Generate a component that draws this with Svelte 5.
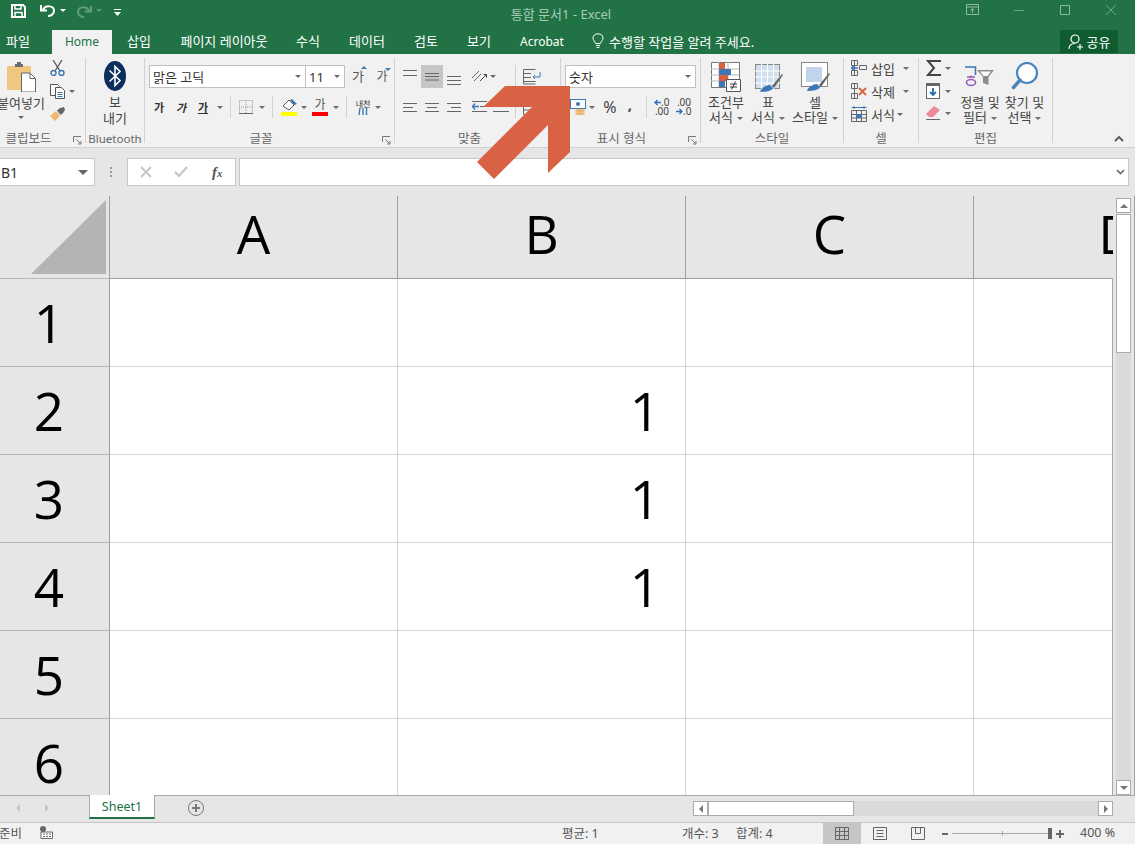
<script>
	const columns = ['A', 'B', 'C', 'D']
	const rows = [
		{ n: 1, b: '' },
		{ n: 2, b: '1' },
		{ n: 3, b: '1' },
		{ n: 4, b: '1' },
		{ n: 5, b: '' },
		{ n: 6, b: '' },
	]
	const mainTabs = [
		{ label: '파일', w: 36 },
		{ label: 'Home', w: 60, active: true, latin: true },
		{ label: '삽입', w: 54 },
		{ label: '페이지 레이아웃', w: 116 },
		{ label: '수식', w: 52 },
		{ label: '데이터', w: 66 },
		{ label: '검토', w: 52 },
		{ label: '보기', w: 54 },
		{ label: 'Acrobat', w: 72, latin: true },
	]
</script>

{#snippet caret(cls = '')}
	<span class="caret {cls}"></span>
{/snippet}

{#snippet launcher()}
	<svg class="launcher" width="9" height="9" viewBox="0 0 9 9" fill="none" stroke="#777">
		<path d="M0.5 6V0.5H8" />
		<path d="M3.5 3.5L7.5 7.5M5 8H8V5" />
	</svg>
{/snippet}

{#snippet lines(d)}
	<svg width="16" height="18" viewBox="0 0 16 18" stroke="#666" fill="none"><path {d} /></svg>
{/snippet}

<div class="app">
	<header class="titlebar">
		<div class="qat">
			<svg class="save" width="15" height="14" viewBox="0 0 15 14" fill="none" stroke="#fff" stroke-width="2">
				<path d="M1 1H12L14 3V13H1Z" />
				<path d="M4 1V5H10V1M4 13V8.5H11V13" stroke-width="1.5" />
			</svg>
			<svg class="undo" width="16" height="13" viewBox="0 0 16 13" fill="none" stroke="#fff" stroke-width="2">
				<path d="M3 6C5 1 14 1 14 7C14 10 11 12 8 12" />
				<path d="M1 1V6.5H7" />
			</svg>
			{@render caret('white')}
			<svg class="redo" width="16" height="13" viewBox="0 0 16 13" fill="none" stroke="#5f9d7e" stroke-width="2">
				<path d="M13 6C11 1 2 1 2 7C2 10 5 12 8 12" />
				<path d="M15 1V6.5H9" />
			</svg>
			{@render caret('dim')}
			<svg class="custom" width="7" height="7" viewBox="0 0 7 7">
				<path d="M0 0H7V1H0ZM0 3H7L3.5 7Z" fill="#fff" />
			</svg>
		</div>
		<div class="doc-title">통합 문서1 - Excel</div>
		<div class="winbtns">
			<svg class="ribbonopt" width="14" height="12" viewBox="0 0 14 12" fill="none" stroke="#8fb8a3">
				<path d="M0.5 0.5H12.5V10.5H0.5ZM0.5 3H12.5M6.5 9V5M4.5 6.5L6.5 4.5L8.5 6.5" />
			</svg>
			<svg width="12" height="12" viewBox="0 0 12 12" stroke="#6ea58a"><path d="M1 6.5H11" /></svg>
			<svg width="12" height="12" viewBox="0 0 12 12" fill="none" stroke="#8fb8a3"><path d="M1.5 1.5H10.5V10.5H1.5Z" /></svg>
			<svg width="12" height="12" viewBox="0 0 12 12" stroke="#6ea58a"><path d="M1 1L11 11M11 1L1 11" /></svg>
		</div>
	</header>

	<nav class="tabrow">
		{#each mainTabs as t}
			<div class="tab" class:active={t.active} class:latin={t.latin} style:width="{t.w}px">{t.label}</div>
		{/each}
		<div class="tellme">
			<svg width="12" height="16" viewBox="0 0 12 16" fill="none" stroke="#fff">
				<path d="M3.5 10.5C3 8 1 7.5 1 5C1 2.5 3.2 0.8 6 0.8S11 2.5 11 5C11 7.5 9 8 8.5 10.5ZM4 12.5H8M4.5 14.5H7.5" />
			</svg>
			<span>수행할 작업을 알려 주세요.</span>
		</div>
		<div class="share">
			<svg width="16" height="16" viewBox="0 0 16 16" fill="none" stroke="#fff" stroke-width="1.2">
				<circle cx="7" cy="5" r="4" />
				<path d="M1 15C1 11 4 9.5 7 9.5M9 13H15M12 10V16" />
			</svg>
			<span>공유</span>
		</div>
	</nav>

	<section class="ribbon">
		<div class="group clipboard">
			<div class="body clipbody">
				<div class="bigbtn paste">
					<svg width="29" height="30" viewBox="0 0 29 30">
						<rect x="0" y="4" width="24" height="24" rx="1" fill="#f0c77f" />
						<path d="M8 5V2H10V0H14V2H16V5Z" fill="#6e6e6e" />
						<path d="M14.5 11H23L28.5 16.5V30H14.5Z" fill="#fff" stroke="#666" />
						<path d="M23 11V16.5H28.5" fill="none" stroke="#666" />
					</svg>
					<span class="bigtext">붙여넣기</span>
					{@render caret()}
				</div>
				<div class="clipstack">
					<svg width="15" height="16" viewBox="0 0 15 16" fill="none">
						<path d="M3 0L10 11M12 0L5 11" stroke="#555" stroke-width="1.3" />
						<circle cx="3.5" cy="13" r="2.5" stroke="#3d78b5" stroke-width="1.4" />
						<circle cx="11.5" cy="13" r="2.5" stroke="#3d78b5" stroke-width="1.4" />
					</svg>
					<div class="withcaret">
						<svg width="15" height="15" viewBox="0 0 15 15" fill="#fff" stroke="#555">
							<path d="M0.5 0.5H7.5L9.5 2.5V11.5H0.5Z" />
							<path d="M5.5 3.5H11.5L14.5 6.5V14.5H5.5Z" />
							<path d="M7.5 8.5H12.5M7.5 10.5H12.5M7.5 12.5H12.5" stroke="#3d78b5" />
						</svg>
						{@render caret()}
					</div>
					<svg width="16" height="14" viewBox="0 0 16 14">
						<path d="M0 9L6 4L10 9L5 14Z" fill="#eeb66e" />
						<path d="M7 3.5L10 1L14 0L15 3L13 6L10.5 8Z" fill="#666" />
					</svg>
				</div>
			</div>
			<div class="label">클립보드{@render launcher()}</div>
		</div>

		<div class="group bluetooth">
			<div class="body">
				<div class="bigbtn bt">
					<svg width="22" height="30" viewBox="0 0 22 30">
						<ellipse cx="11" cy="15" rx="11" ry="15" fill="#0b2e5e" />
						<path d="M5.5 9.5L16 19.5L11 24.5V5.5L16 10.5L5.5 20.5" fill="none" stroke="#fff" stroke-width="1.6" />
					</svg>
					<span class="bigtext">보</span>
					<span class="bigtext">내기</span>
				</div>
			</div>
			<div class="label">Bluetooth</div>
		</div>

		<div class="group font">
			<div class="body stack">
				<div class="row first">
					<div class="combo fontname"><span>맑은 고딕</span>{@render caret()}</div>
					<div class="combo fontsize"><span>11</span>{@render caret()}</div>
					<span class="ga grow">가<i class="up"></i></span>
					<span class="ga shrink">가<i class="down"></i></span>
				</div>
				<div class="row second">
					<b class="gl">가</b>
					<em class="gl">가</em>
					<u class="gl">가</u>
					{@render caret('c-under')}
					<span class="vsep"></span>
					<svg class="borders" width="14" height="14" viewBox="0 0 14 14" fill="none" stroke="#999" stroke-dasharray="1 1">
						<path d="M0.5 0.5H13.5M0.5 0.5V13.5M13.5 0.5V13.5M7 0V14M0 7H14" />
						<path d="M0 13.5H14" stroke="#666" stroke-dasharray="none" />
					</svg>
					{@render caret('c-border')}
					<span class="vsep"></span>
					<span class="colorbtn">
						<svg width="15" height="12" viewBox="0 0 15 12">
							<path d="M1 7L7 1L12 6L7 11Z" fill="#fff" stroke="#555" />
							<path d="M8 1L12 6L15 5L10 0Z" fill="#3d78b5" />
						</svg>
						<i class="yellow"></i>
					</span>
					{@render caret('c-fill')}
					<span class="colorbtn text">
						<span class="ga small">가</span>
						<i class="red"></i>
					</span>
					{@render caret('c-text')}
					<span class="vsep"></span>
					<span class="phonetic">내천<svg width="10" height="7" viewBox="0 0 10 7" stroke="#3d78b5" stroke-width="1.4"><path d="M2 0L1 7M5 0V7M8.5 0V7" /></svg></span>
					{@render caret('c-under')}
				</div>
			</div>
			<div class="label">글꼴{@render launcher()}</div>
		</div>

		<div class="group align">
			<div class="body stack">
				<div class="row first">
					<span class="alignbtn">{@render lines('M1 2.5H15M1 7.5H15')}</span>
					<span class="alignbtn on">{@render lines('M1 5.5H15M1 8.5H15M1 12H15')}</span>
					<span class="alignbtn">{@render lines('M1 8.5H15M1 12.5H15M1 16.5H15')}</span>
					<span class="orient">
						<svg width="18" height="16" viewBox="0 0 18 16" fill="none" stroke="#666">
							<path d="M1 9L8 2M3 12L10 5" />
							<path d="M9 12L15 6M12.5 5.5H15.5V8.5" stroke="#444" />
						</svg>
					</span>
					{@render caret('c-orient')}
					<span class="vsep tall"></span>
					<svg class="wrap" width="18" height="16" viewBox="0 0 18 16" fill="none" stroke="#666">
						<path d="M0.5 0.5H12.5M0.5 4.5H8M0.5 8.5H8M0.5 12.5H12.5M0.5 0.5V15H12.5" />
						<path d="M10 8H17V3M10 8L12 6M10 8L12 10" stroke="#3d78b5" />
					</svg>
				</div>
				<div class="row second">
					<span class="alignbtn">{@render lines('M1 5.5H15M1 9.5H11M1 13.5H15')}</span>
					<span class="alignbtn">{@render lines('M1 5.5H15M3 9.5H13M1 13.5H15')}</span>
					<span class="alignbtn">{@render lines('M1 5.5H15M5 9.5H15M1 13.5H15')}</span>
					<svg class="indent" width="37" height="14" viewBox="0 0 37 14" fill="none" stroke="#666">
						<path d="M0 1.5H15M8 6.5H15M0 11.5H15M21 1.5H37M27 6.5H37M21 11.5H37" />
						<path d="M0 6.5H7M3 3.5L0.5 6.5L3 9.5" stroke="#3d78b5" stroke-width="1.4" />
					</svg>
					<span class="vsep low"></span>
					<svg class="merge" width="16" height="15" viewBox="0 0 16 15" fill="none" stroke="#666">
						<path d="M0.5 0.5H15.5V14.5H0.5ZM0.5 10H15.5" />
					</svg>
				</div>
			</div>
			<div class="label">맞춤</div>
		</div>

		<div class="group number">
			<div class="body stack">
				<div class="combo numfmt"><span>숫자</span>{@render caret()}</div>
				<div class="row second">
					<svg class="currency" width="16" height="16" viewBox="0 0 16 16">
						<rect x="0.5" y="0.5" width="15" height="9" fill="#fff" stroke="#3d78b5" />
						<circle cx="8" cy="5" r="2" fill="#3d78b5" />
						<ellipse cx="10" cy="11.5" rx="5" ry="1.5" fill="#eeb66e" />
						<ellipse cx="10" cy="14.5" rx="5" ry="1.5" fill="#eeb66e" />
					</svg>
					{@render caret('c-cur')}
					<span class="percent">%</span>
					<span class="comma">,</span>
					<span class="vsep"></span>
					<span class="dec">
						<svg width="7" height="7" viewBox="0 0 7 7" fill="none" stroke="#2a6cb0" stroke-width="1.3"><path d="M7 3.5H1M3.5 1L1 3.5L3.5 6" /></svg>.0<br />.00
					</span>
					<span class="dec second-dec">
						.00<br /><svg width="7" height="7" viewBox="0 0 7 7" fill="none" stroke="#2a6cb0" stroke-width="1.3"><path d="M0 3.5H6M3.5 1L6 3.5L3.5 6" /></svg>.0
					</span>
				</div>
			</div>
			<div class="label">표시 형식{@render launcher()}</div>
		</div>

		<div class="group styles">
			<div class="body threecol">
				<div class="bigbtn">
					<svg width="30" height="30" viewBox="0 0 30 30">
						<path d="M0.5 0.5H28.5V25.5H0.5Z" fill="#fff" stroke="#777" />
						<path d="M0 7H28M0 13H28M0 19H28M8 0V25M17 0V25" stroke="#bbb" />
						<path d="M8 1H14V7H8ZM8 13H17V19H8Z" fill="#d9603f" />
						<path d="M8 7H20V13H8ZM8 19H14V25H8Z" fill="#3d78b5" />
						<path d="M15.5 17.5H29.5V29.5H15.5Z" fill="#fff" stroke="#555" />
						<path d="M19 22H26M19 25H26M24.5 19.5L20.5 27.5" stroke="#333" fill="none" />
					</svg>
					<span class="bigtext">조건부</span>
					<span class="bigtext">서식{@render caret()}</span>
				</div>
				<div class="bigbtn">
					<svg width="30" height="30" viewBox="0 0 30 30">
						<rect x="2.5" y="2.5" width="24" height="24" fill="#d3dfee" stroke="#888" />
						<path d="M2 9H27M2 15H27M2 21H27M8.5 2V27M14.5 2V27M20.5 2V27" stroke="#fff" />
						<path d="M7 30C8 26 13 23 17 23L20 26C19 29 13 30 7 30Z" fill="#3d78b5" />
						<path d="M19 24L29 12L30 13L21 26Z" fill="#666" />
					</svg>
					<span class="bigtext">표</span>
					<span class="bigtext">서식{@render caret()}</span>
				</div>
				<div class="bigbtn">
					<svg width="30" height="30" viewBox="0 0 30 30">
						<rect x="1.5" y="0.5" width="26" height="24" fill="#fff" stroke="#888" />
						<rect x="6" y="5" width="16" height="15" fill="#c0d4ea" />
						<path d="M7 29C8 25 13 22 17 22L20 25C19 28 13 29 7 29Z" fill="#3d78b5" />
						<path d="M19 23L29 11L30 12L21 25Z" fill="#666" />
					</svg>
					<span class="bigtext">셀</span>
					<span class="bigtext">스타일{@render caret()}</span>
				</div>
			</div>
			<div class="label">스타일</div>
		</div>

		<div class="group cells">
			<div class="body cellstack">
				<div class="cellbtn">
					<svg width="16" height="16" viewBox="0 0 16 16" fill="none" stroke="#666">
						<path d="M0.5 0.5H6.5V5.5H0.5ZM0.5 10.5H6.5V15.5H0.5ZM8.5 5.5H15.5V9.5H8.5ZM3.5 0V16" />
						<path d="M0 8H7M3 5.5L0.5 8L3 10.5" stroke="#3d78b5" stroke-width="1.4" />
					</svg>
					<span>삽입</span>{@render caret()}
				</div>
				<div class="cellbtn">
					<svg width="16" height="16" viewBox="0 0 16 16" fill="none" stroke="#666">
						<path d="M0.5 0.5H6.5V5.5H0.5ZM0.5 10.5H6.5V15.5H0.5ZM3.5 0V16" />
						<path d="M8 5L15 12M15 5L8 12" stroke="#d9603f" stroke-width="1.8" />
					</svg>
					<span>삭제</span>{@render caret()}
				</div>
				<div class="cellbtn last">
					<svg width="16" height="16" viewBox="0 0 16 16" fill="none" stroke="#666">
						<path d="M0.5 1.5H15.5M3 0V3M13 0V3" stroke="#3d78b5" />
						<path d="M0.5 4.5H15.5V15.5H0.5ZM0.5 8.5H15.5M0.5 12H15.5M5.5 4.5V15.5M10.5 4.5V15.5" />
						<rect x="5" y="8" width="6" height="4" fill="#3d78b5" stroke="none" />
					</svg>
					<span>서식</span>{@render caret()}
				</div>
			</div>
			<div class="label">셀</div>
		</div>

		<div class="group edit">
			<div class="body editbody">
				<div class="editstack">
					<div class="withcaret">
						<svg width="15" height="16" viewBox="0 0 15 16" fill="none" stroke="#444" stroke-width="2">
							<path d="M15 1H2L8 8L2 15H15" />
						</svg>
						{@render caret()}
					</div>
					<div class="withcaret">
						<svg width="15" height="16" viewBox="0 0 15 16">
							<rect x="0.5" y="0.5" width="13" height="15" fill="#fff" stroke="#666" />
							<rect x="0" y="0" width="14" height="3" fill="#666" />
							<path d="M7 5V12M4 9L7 12L10 9" fill="none" stroke="#2a6cb0" stroke-width="1.8" />
						</svg>
						{@render caret()}
					</div>
					<div class="withcaret">
						<svg width="15" height="14" viewBox="0 0 15 14">
							<path d="M0 8L8 0L14 4L7 11H3Z" fill="#ec8a98" />
							<path d="M0 13.5H14" stroke="#666" />
						</svg>
						{@render caret()}
					</div>
				</div>
				<div class="bigbtn sort">
					<svg width="30" height="22" viewBox="0 0 30 22" fill="none">
						<path d="M0 2H10.5V10" stroke="#3d78b5" stroke-width="1.6" />
						<path d="M2 12H10M6 10.500V13" stroke="#9a5bb8" stroke-width="1.3" />
						<ellipse cx="6" cy="17.500" rx="4.500" ry="3" stroke="#9a5bb8" stroke-width="1.6" />
						<path d="M12 5H29L23.500 12V20L18 18V12Z" fill="#8c8c8c" />
						<path d="M15 6.500H26L22.500 11H18.500Z" fill="#fff" />
					</svg>
					<span class="bigtext">정렬 및</span>
					<span class="bigtext">필터{@render caret()}</span>
				</div>
				<div class="bigbtn find">
					<svg width="28" height="28" viewBox="0 0 28 28" fill="none" stroke="#4a84bf">
						<circle cx="16" cy="11" r="10" stroke-width="2.2" fill="#fff" />
						<path d="M9 18L2.500 25.500" stroke-width="3.500" stroke-linecap="round" />
					</svg>
					<span class="bigtext">찾기 및</span>
					<span class="bigtext">선택{@render caret()}</span>
				</div>
			</div>
			<div class="label">편집</div>
		</div>

		<svg class="collapse" width="10" height="7" viewBox="0 0 10 7" fill="none" stroke="#555" stroke-width="1.8">
			<path d="M1 6L5 2L9 6" />
		</svg>
	</section>

	<section class="formulabar">
		<div class="namebox"><span>B1</span>{@render caret('dark')}</div>
		<div class="grip"></div>
		<div class="fxbox">
			<svg width="12" height="12" viewBox="0 0 12 12" stroke="#c6c6c6" stroke-width="1.8"><path d="M1 1L11 11M11 1L1 11" /></svg>
			<svg width="14" height="12" viewBox="0 0 14 12" fill="none" stroke="#c6c6c6" stroke-width="2.2"><path d="M1 6L5 10L13 1" /></svg>
			<span class="fx">f<small>x</small></span>
		</div>
		<div class="formula">
			<svg width="9" height="6" viewBox="0 0 9 6" fill="none" stroke="#666" stroke-width="1.6"><path d="M1 1L4.5 4.5L8 1" /></svg>
		</div>
	</section>

	<section class="sheetarea">
		<div class="grid">
			<div class="corner">
				<svg width="75" height="74" viewBox="0 0 75 74"><path d="M0 74L75 0V74Z" fill="#b4b4b4" /></svg>
			</div>
			{#each columns as c}
				<div class="colhead">{c}</div>
			{/each}
			{#each rows as r}
				<div class="rowhead">{r.n}</div>
				{#each columns as c}
					<div class="cell">{c === 'B' ? r.b : ''}</div>
				{/each}
			{/each}
		</div>
		<div class="vscroll">
			<div class="sbtn"><span class="tri up"></span></div>
			<div class="vthumb"></div>
			<div class="strack"></div>
			<div class="sbtn"><span class="tri down"></span></div>
		</div>
	</section>

	<section class="sheetbar">
		<div class="nav">
			<span class="tri left dim"></span>
			<span class="tri right dim"></span>
		</div>
		<div class="sheettab">Sheet1</div>
		<svg class="addsheet" width="16" height="16" viewBox="0 0 16 16" fill="none" stroke="#777">
			<circle cx="8" cy="8" r="7.5" />
			<path d="M4 8H12M8 4V12" stroke-width="2" />
		</svg>
		<div class="hscroll">
			<div class="sbtn"><span class="tri left"></span></div>
			<div class="hthumb"></div>
			<div class="htrack"></div>
			<div class="sbtn"><span class="tri right"></span></div>
		</div>
	</section>

	<footer class="statusbar">
		<span class="ready">준비</span>
		<svg class="macro" width="13" height="13" viewBox="0 0 13 13">
			<circle cx="3" cy="3" r="3" fill="#666" />
			<path d="M1 6H12.5V12.5H1Z" fill="#fff" stroke="#666" />
			<path d="M3 8H5M6 8H8M9 8H11M3 10.5H5M6 10.5H8M9 10.5H11" stroke="#666" />
		</svg>
		<span class="stat avg">평균: 1</span>
		<span class="stat count">개수: 3</span>
		<span class="stat sum">합계: 4</span>
		<div class="views">
			<span class="view on">
				<svg width="14" height="13" viewBox="0 0 14 13" fill="none" stroke="#666"><path d="M0.5 0.5H13.5V12.5H0.5ZM0.5 4.5H13.5M0.5 8.5H13.5M4.5 0.5V12.5M9.5 0.5V12.5" /></svg>
			</span>
			<span class="view">
				<svg width="14" height="13" viewBox="0 0 14 13" fill="none" stroke="#666"><path d="M0.5 0.5H13.5V12.5H0.5ZM3.5 3.5H10.5M3.5 6.5H10.5M3.5 9.5H10.5" /></svg>
			</span>
			<span class="view">
				<svg width="14" height="13" viewBox="0 0 14 13" fill="none" stroke="#666"><path d="M0.5 0.5H13.5V12.5H0.5ZM4.5 0.5V6.5H9.5V0.5" /></svg>
			</span>
		</div>
		<div class="zoom">
			<i class="minus"></i>
			<div class="slider"><i class="tick"></i><i class="knob"></i></div>
			<i class="plus"></i>
			<span class="pct">400 %</span>
		</div>
	</footer>

	<svg class="arrow" width="1135" height="200" viewBox="0 0 1135 200">
		<path d="M505 86H570V152L548 173V125L494 179L477 162L532 107H483Z" fill="#da6244" />
	</svg>
</div>

<style>
	:global(body) {
		margin: 0;
		background: #e6e6e6;
	}

	.app {
		position: relative;
		width: 1135px;
		height: 844px;
		overflow: hidden;
		display: flex;
		flex-direction: column;
		font-family: "Noto Sans", "Noto Sans CJK KR", sans-serif;
		font-size: 13px;
		color: #444;
	}

	svg {
		flex: none;
	}

	/* title */
	.titlebar {
		height: 30px;
		background: #217346;
		display: flex;
		align-items: center;
		position: relative;
		flex: none;
	}

	.qat {
		display: flex;
		align-items: center;
		padding-left: 11px;
		margin-top: -10px;
	}

	.qat .save {
		margin-right: 14px;
		margin-top: 1px;
	}

	.qat .redo {
		margin-left: 10px;
		margin-top: 3px;
	}

	.qat .custom {
		margin-left: 12px;
		margin-top: 4px;
	}

	.qat :global(.caret) {
		margin: 0 0 0 4px;
	}

	.doc-title {
		position: absolute;
		left: 0;
		width: 1122px;
		text-align: center;
		top: 4px;
		font-size: 13px;
		color: #a9c9b8;
	}

	.winbtns {
		margin-left: auto;
		display: flex;
		align-items: center;
		gap: 34px;
		padding-right: 18px;
		margin-top: -10px;
	}

	.ribbonopt {
		margin-right: -1px;
	}

	/* tabs */
	.tabrow {
		height: 24px;
		background: #217346;
		display: flex;
		color: #fff;
		flex: none;
	}

	.tab {
		text-align: center;
		line-height: 23px;
		font-size: 13px;
		white-space: nowrap;
		flex: none;
	}

	.tab:first-child {
		margin-right: 16px;
	}

	.tab.latin {
		font-size: 12px;
	}

	.tab.active {
		background: #f1f1f1;
		color: #217346;
	}

	.tellme {
		display: flex;
		align-items: center;
		gap: 5px;
		margin-left: 14px;
		font-size: 13px;
		padding-bottom: 2px;
	}

	.share {
		margin-left: auto;
		margin-right: 17px;
		width: 58px;
		height: 23px;
		background: #0f5c30;
		display: flex;
		align-items: center;
		justify-content: center;
		gap: 3px;
		font-size: 13px;
	}

	/* ribbon */
	.ribbon {
		height: 93px;
		background: #f1f1f1;
		border-bottom: 1px solid #d0d0d0;
		display: flex;
		flex: none;
		position: relative;
	}

	.group {
		margin-top: 4px;
		height: 85px;
		border-right: 1px solid #d2d2d2;
		display: flex;
		flex-direction: column;
		flex: none;
		box-sizing: border-box;
	}

	.body {
		height: 71px;
		flex: none;
		position: relative;
	}

	.label {
		position: relative;
		flex: none;
		height: 14px;
		text-align: center;
		font-size: 12.5px;
		line-height: 15px;
		color: #666;
		padding-top: 2px;
		white-space: nowrap;
	}

	.launcher {
		position: absolute;
		right: 3px;
		top: 7px;
	}

	.clipboard { width: 86px; }
	.clipboard .label { padding-right: 28px; }
	.bluetooth { width: 59px; }
	.bluetooth .label { font-size: 11.5px; }
	.font { width: 250px; }
	.font .label { padding-right: 17px; }
	.align { width: 166px; }
	.align .label { padding-right: 16px; }
	.number { width: 140px; }
	.number .label { padding-right: 18px; }
	.styles { width: 143px; }
	.cells { width: 75px; }
	.edit { width: 134px; }

	.bigtext {
		display: block;
		font-size: 13px;
		line-height: 15px;
		text-align: center;
		white-space: nowrap;
		color: #444;
	}

	.bigbtn {
		display: flex;
		flex-direction: column;
		align-items: center;
		flex: none;
	}

	.bigbtn svg {
		margin-bottom: 3px;
		margin-top: 4px;
	}

	.clipbody {
		display: flex;
	}

	.paste {
		width: 42px;
	}

	.paste .bigtext {
		margin-bottom: 5px;
		line-height: 16px;
	}

	.clipstack {
		margin: 2px 0 0 8px;
		display: flex;
		flex-direction: column;
		gap: 8px;
	}

	.withcaret {
		display: flex;
		align-items: center;
		gap: 4px;
	}

	.bt {
		width: 58px;
	}

	.bt svg {
		margin: 3px 0 3px;
	}

	.bt .bigtext {
		line-height: 16px;
	}

	/* rows */
	.stack {
		display: flex;
		flex-direction: column;
	}

	.row {
		display: flex;
		align-items: center;
		flex: none;
	}

	.row.first {
		height: 23px;
		margin-top: 7px;
		padding-left: 4px;
	}

	.row.second {
		height: 24px;
		margin-top: 7px;
		padding-left: 3px;
	}

	.combo {
		height: 23px;
		box-sizing: border-box;
		border: 1px solid #c0c0c0;
		background: #fff;
		display: flex;
		align-items: center;
		justify-content: space-between;
		padding: 0 4px 0 3px;
		font-size: 13px;
		color: #333;
		flex: none;
	}

	.fontname { width: 157px; }
	.fontsize { width: 40px; margin-left: -1px; }
	.numfmt { width: 131px; margin: 7px 0 0 4px; }

	.ga {
		position: relative;
		font-size: 13px;
		color: #555;
		line-height: 1;
		flex: none;
	}

	.grow { margin-left: 5px; width: 16px; text-align: center; }
	.shrink { margin-left: 8px; width: 16px; text-align: center; font-size: 12px; }

	.ga i {
		position: absolute;
		right: -1px;
		top: -4px;
		border: 3px solid transparent;
		border-top: 0;
	}

	.ga .up { border-bottom: 3px solid #3d78b5; }
	.ga .down { border-bottom: 0; border-top: 3px solid #3d78b5; top: -3px; }

	.gl {
		font-size: 11px;
		font-style: normal;
		font-weight: 700;
		color: #333;
		width: 22px;
		flex: none;
		text-align: center;
	}

	em.gl { font-style: italic; }

	.vsep {
		width: 1px;
		height: 22px;
		background: #d2d2d2;
		margin: 0 8px 0 7px;
		flex: none;
	}

	.vsep.tall {
		height: 23px;
		margin: 0 7px 0 19px;
	}

	.vsep.low {
		margin: 0 7px 0 6px;
	}

	.colorbtn {
		display: flex;
		flex-direction: column;
		align-items: center;
		width: 16px;
		gap: 1px;
		flex: none;
	}

	.colorbtn.text { margin-left: 5px; }

	.colorbtn i {
		width: 16px;
		height: 4px;
	}

	.colorbtn .yellow { background: #ffff00; }
	.colorbtn .red { background: #ff0000; }

	.small { font-size: 12px; line-height: 12px; }

	.phonetic {
		font-size: 8px;
		line-height: 9px;
		display: flex;
		flex-direction: column;
		align-items: center;
		width: 16px;
		color: #333;
		flex: none;
		white-space: nowrap;
	}

	.caret.c-under { margin-left: 3px; }
	.caret.c-border { margin-left: 6px; }
	.caret.c-fill { margin-left: 4px; }
	.caret.c-text { margin-left: 5px; }
	.caret.c-orient { margin-left: 1px; }
	.caret.c-cur { margin-left: 3px; }
	.phonetic + .caret { margin-left: 4px; }

	.alignbtn {
		width: 22px;
		height: 23px;
		flex: none;
		display: flex;
		align-items: center;
		justify-content: center;
	}

	.alignbtn.on { background: #c6c6c6; }
	.align .row.first, .align .row.second { padding-left: 4px; }

	.orient { margin-left: 6px; }
	.orient svg { display: block; }
	.indent { margin-left: 7px; }

	.number .row.second {
		padding-left: 9px;
	}

	.percent {
		font-size: 16px;
		width: 16px;
		text-align: center;
		margin-left: 7px;
		color: #444;
		flex: none;
	}

	.comma {
		font-size: 15px;
		font-weight: 700;
		width: 12px;
		text-align: center;
		margin: -6px 0 0 6px;
		color: #444;
		flex: none;
	}

	.number .vsep {
		margin: 0 7px 0 10px;
	}

	.dec {
		font-size: 10px;
		line-height: 9px;
		width: 15px;
		text-align: right;
		color: #444;
		flex: none;
		white-space: nowrap;
	}

	.second-dec {
		margin-left: 7px;
	}

	.threecol {
		display: flex;
		padding-left: 2px;
	}

	.threecol .bigbtn {
		width: 46px;
	}

	.threecol .bigbtn:nth-child(2) {
		width: 38px;
	}

	.threecol .bigbtn:nth-child(3) {
		width: 56px;
	}

	.bigtext :global(.caret) {
		margin-left: 4px;
		vertical-align: 2px;
	}

	.cellstack {
		display: flex;
		flex-direction: column;
		padding: 2px 0 0 7px;
		gap: 7px;
		box-sizing: border-box;
	}

	.cellbtn {
		display: flex;
		align-items: center;
		height: 16px;
		font-size: 13px;
		color: #444;
	}

	.cellbtn span:not(.caret) {
		margin-left: 4px;
		width: 32px;
	}

	.cellbtn.last span:not(.caret) {
		width: 26px;
	}

	.editbody {
		display: flex;
	}

	.editstack {
		display: flex;
		flex-direction: column;
		box-sizing: border-box;
		padding: 2px 0 0 7px;
		gap: 7px;
		width: 39px;
		flex: none;
	}

	.sort { width: 44px; }
	.sort svg { margin: 7px 0 8px; }
	.find { width: 45px; }
	.find svg { margin: 4px 0 5px; }

	.collapse {
		position: absolute;
		right: 11px;
		bottom: 5px;
	}

	.caret {
		display: inline-block;
		width: 0;
		height: 0;
		flex: none;
		border: 3.5px solid transparent;
		border-bottom: 0;
		border-top: 3.5px solid #6a6a6a;
	}

	.caret.white { border-top-color: #fff; }
	.caret.dim { border-top-color: #5f9d7e; }
	.caret.dark { border-top-color: #666; border-width: 5px 5px 0; }

	/* formula */
	.formulabar {
		height: 48px;
		flex: none;
		box-sizing: border-box;
		background: #e6e6e6;
		display: flex;
		padding-top: 10px;
	}

	.namebox, .fxbox, .formula {
		height: 28px;
		box-sizing: border-box;
		background: #fff;
		border: 1px solid #c6c6c6;
		display: flex;
		align-items: center;
	}

	.namebox {
		width: 96px;
		margin-left: -1px;
		padding: 0 6px 0 2px;
		justify-content: space-between;
		font-size: 14px;
		border-left: 0;
		color: #333;
	}

	.grip {
		width: 2px;
		height: 10px;
		margin: 9px 15px 0;
		background: repeating-linear-gradient(#999 0 2px, transparent 2px 4px);
	}

	.fxbox {
		width: 109px;
		gap: 22px;
		padding-left: 12px;
	}

	.fx {
		font-family: "Liberation Serif", serif;
		font-style: italic;
		font-weight: 700;
		font-size: 15px;
		color: #555;
		margin-left: 2px;
	}

	.fx small { font-size: 11px; }

	.formula {
		width: 890px;
		margin-left: 3px;
		justify-content: flex-end;
		padding-right: 3px;
	}

	/* grid */
	.sheetarea {
		height: 599px;
		flex: none;
		display: flex;
		background: #e6e6e6;
	}

	.grid {
		width: 1113px;
		height: 599px;
		overflow: hidden;
		display: grid;
		grid-template-columns: 110px repeat(4, 288px);
		grid-template-rows: 83px repeat(6, 88px);
		font-family: "Open Sans", "Noto Sans", sans-serif;
		color: #000;
		position: relative;
		flex: none;
	}

	.grid::after {
		content: "";
		position: absolute;
		right: 0;
		top: 82px;
		bottom: 0;
		width: 1px;
		background: #a9a9a9;
	}

	.corner {
		background: #e6e6e6;
		border-right: 1px solid #9e9e9e;
		border-bottom: 1px solid #b8b8b8;
		box-sizing: border-box;
		padding: 4px 0 0 31px;
	}

	.corner svg { display: block; }

	.colhead {
		border-right: 1px solid #9e9e9e;
		border-bottom: 1px solid #9e9e9e;
		box-sizing: border-box;
		font-size: 53px;
		line-height: 75px;
		text-align: center;
		background: #e6e6e6;
	}

	.rowhead {
		border-right: 1px solid #9e9e9e;
		border-bottom: 1px solid #b8b8b8;
		box-sizing: border-box;
		font-size: 53px;
		line-height: 88px;
		text-align: center;
		background: #e6e6e6;
		padding-right: 11px;
	}

	.cell {
		background: #fff;
		border-right: 1px solid #d4d4d4;
		border-bottom: 1px solid #d4d4d4;
		box-sizing: border-box;
		font-size: 53px;
		line-height: 88px;
		text-align: right;
		padding-right: 25px;
	}

	/* scrollbars */
	.vscroll {
		width: 22px;
		height: 599px;
		box-sizing: border-box;
		padding: 2px 3px 0;
		display: flex;
		flex-direction: column;
		border-right: 1px solid #a0a0a0;
	}

	.sbtn {
		width: 15px;
		height: 15px;
		box-sizing: border-box;
		border: 1px solid #ababab;
		background: #fff;
		display: flex;
		align-items: center;
		justify-content: center;
		flex: none;
	}

	.vthumb {
		width: 15px;
		height: 139px;
		box-sizing: border-box;
		margin-top: 1px;
		background: #fff;
		border: 1px solid #ababab;
		flex: none;
	}

	.strack {
		flex: 1;
		background: #dadada;
		width: 15px;
	}

	.tri {
		width: 0;
		height: 0;
		border: 4px solid transparent;
	}

	.tri.up { border-top: 0; border-bottom: 4px solid #777; }
	.tri.down { border-bottom: 0; border-top: 4px solid #777; }
	.tri.left { border-left: 0; border-right: 4px solid #777; }
	.tri.right { border-right: 0; border-left: 4px solid #777; }
	.tri.dim.left { border-right-color: #c2c2c2; }
	.tri.dim.right { border-left-color: #c2c2c2; }

	/* sheet tabs */
	.sheetbar {
		height: 27px;
		flex: none;
		box-sizing: border-box;
		background: #e6e6e6;
		border-top: 1px solid #a9a9a9;
		display: flex;
		align-items: flex-start;
	}

	.nav {
		width: 89px;
		flex: none;
		display: flex;
		gap: 25px;
		padding: 8px 0 0 16px;
		box-sizing: border-box;
	}

	.sheettab {
		width: 66px;
		height: 24px;
		margin-top: -1px;
		box-sizing: border-box;
		background: #fff;
		border: 1px solid #a9a9a9;
		border-top: 0;
		border-bottom: 2px solid #217346;
		text-align: center;
		color: #217346;
		font-size: 12.5px;
		line-height: 23px;
		flex: none;
	}

	.addsheet {
		margin: 4px 0 0 33px;
		flex: none;
	}

	.hscroll {
		margin-left: auto;
		margin-top: 5px;
		margin-right: 22px;
		width: 420px;
		display: flex;
		flex: none;
	}

	.hthumb {
		width: 146px;
		height: 15px;
		box-sizing: border-box;
		background: #fff;
		border: 1px solid #ababab;
		flex: none;
	}

	.htrack {
		flex: 1;
		background: #dadada;
	}

	/* status */
	.statusbar {
		height: 22px;
		flex: none;
		box-sizing: border-box;
		background: #f1f1f1;
		border-top: 1px solid #c6c6c6;
		display: flex;
		align-items: center;
		font-size: 13px;
		color: #555;
	}

	.ready {
		margin: -3px 0 0 -1px;
		width: 41px;
		flex: none;
		font-size: 12.5px;
	}

	.macro {
		margin-top: -3px;
	}

	.stat {
		margin-top: -3px;
		flex: none;
		font-size: 12.5px;
	}

	.avg { margin-left: 509px; width: 120px; }
	.count { width: 54px; }

	.views {
		display: flex;
		margin-left: auto;
		align-self: stretch;
	}

	.view {
		width: 38px;
		display: flex;
		align-items: center;
		justify-content: center;
		margin-top: -1px;
	}

	.view.on { background: #c6c6c6; }

	.zoom {
		display: flex;
		align-items: center;
		width: 198px;
		padding-left: 5px;
		box-sizing: border-box;
		flex: none;
	}

	.minus {
		width: 6px;
		height: 2px;
		background: #666;
		flex: none;
	}

	.slider {
		width: 96px;
		height: 1px;
		margin: 0 0 0 4px;
		background: #a9a9a9;
		position: relative;
		flex: none;
	}

	.tick {
		position: absolute;
		left: 50px;
		top: -2px;
		width: 1px;
		height: 5px;
		background: #a9a9a9;
	}

	.knob {
		position: absolute;
		right: -4px;
		top: -5px;
		width: 4px;
		height: 11px;
		background: #666;
	}

	.plus {
		width: 8px;
		height: 2px;
		background: #666;
		position: relative;
		margin-left: 8px;
		flex: none;
	}

	.plus::after {
		content: "";
		position: absolute;
		left: 3px;
		top: -3px;
		width: 2px;
		height: 8px;
		background: #666;
	}

	.pct {
		margin: -3px 0 0 16px;
		white-space: nowrap;
		font-size: 12.5px;
	}

	.arrow {
		position: absolute;
		left: 0;
		top: 0;
		pointer-events: none;
	}
</style>
